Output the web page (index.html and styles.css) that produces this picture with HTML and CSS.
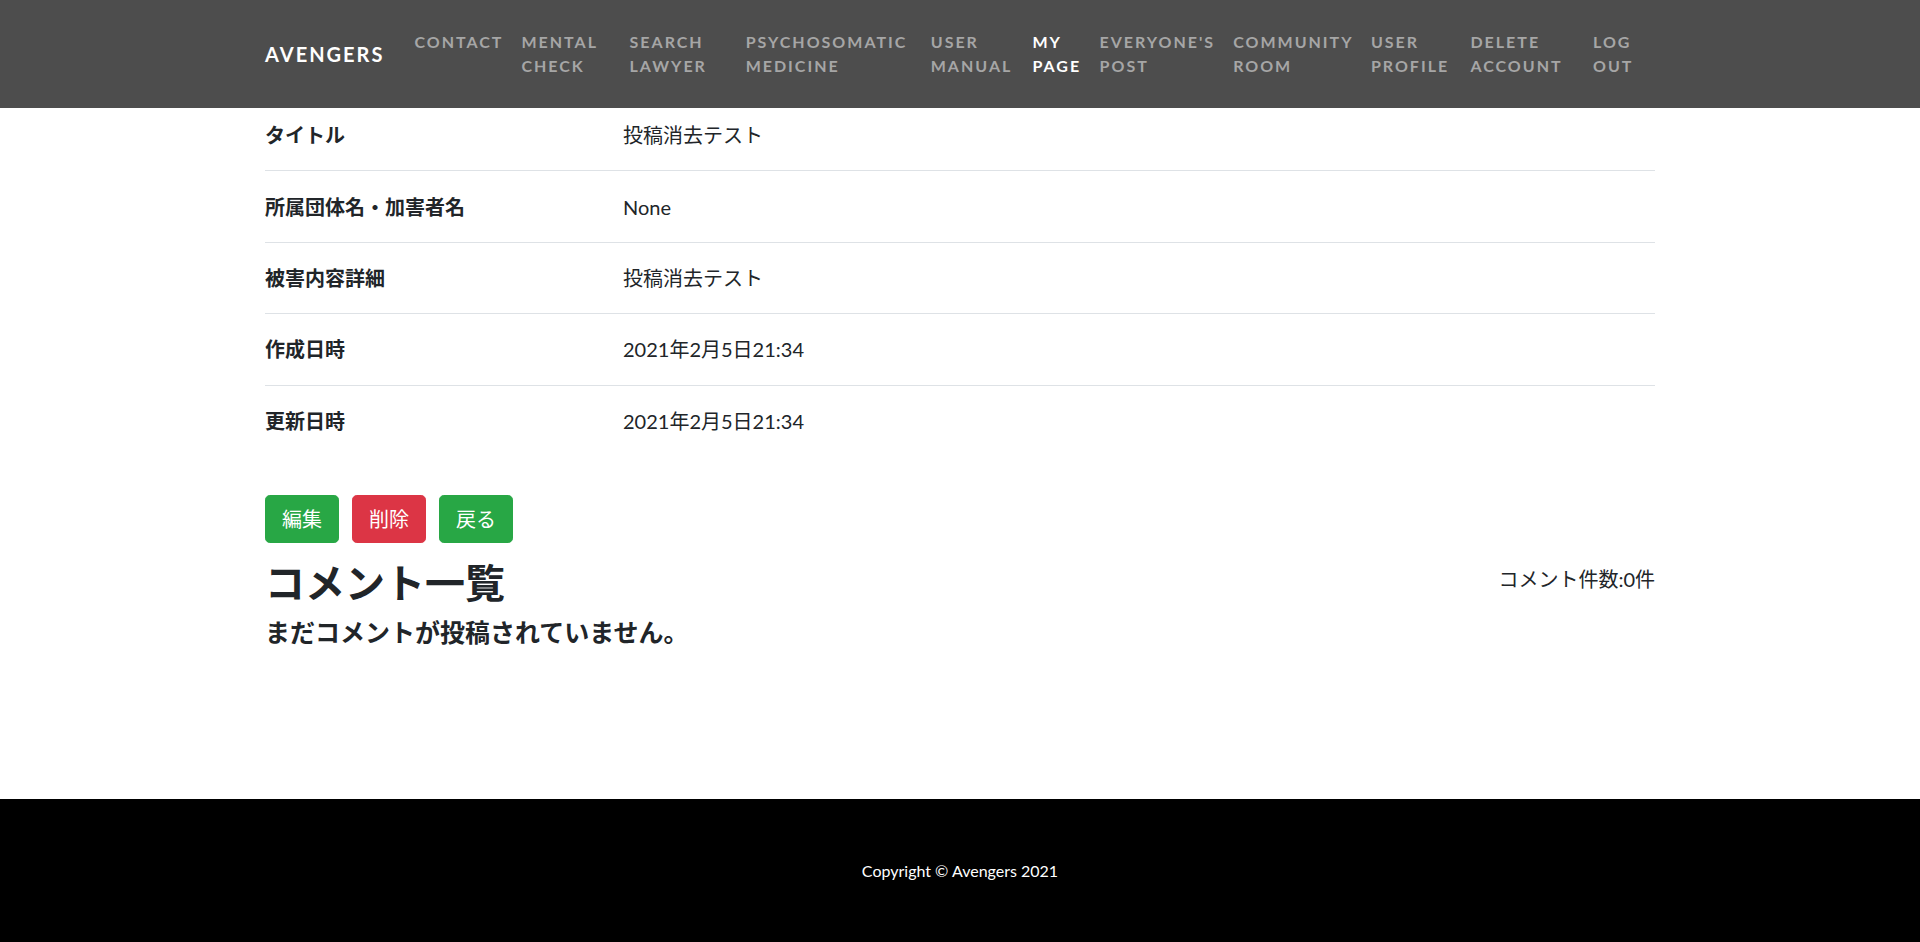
FILE: index.html
```html
<!DOCTYPE html>
<html lang="ja">
<head>
<meta charset="utf-8">
<title>Avengers</title>
<link rel="stylesheet" href="styles.css">
</head>
<body>
<nav class="navbar">
  <div class="nav-inner">
    <a class="brand" href="#">AVENGERS</a>
    <ul class="nav-list">
      <li><a href="#">CONTACT</a></li>
      <li><a href="#">MENTAL CHECK</a></li>
      <li><a href="#">SEARCH LAWYER</a></li>
      <li><a href="#">PSYCHOSOMATIC MEDICINE</a></li>
      <li><a href="#">USER MANUAL</a></li>
      <li><a href="#" class="active">MY PAGE</a></li>
      <li><a href="#">EVERYONE'S POST</a></li>
      <li><a href="#">COMMUNITY ROOM</a></li>
      <li><a href="#">USER PROFILE</a></li>
      <li><a href="#">DELETE ACCOUNT</a></li>
      <li><a href="#">LOG OUT</a></li>
    </ul>
  </div>
</nav>

<main class="container">
  <table class="detail">
    <tr><th>タイトル</th><td>投稿消去テスト</td></tr>
    <tr><th>所属団体名・加害者名</th><td>None</td></tr>
    <tr><th>被害内容詳細</th><td>投稿消去テスト</td></tr>
    <tr><th>作成日時</th><td>2021年2月5日21:34</td></tr>
    <tr><th>更新日時</th><td>2021年2月5日21:34</td></tr>
  </table>

  <div class="actions">
    <a href="#" class="btn btn-green">編集</a>
    <a href="#" class="btn btn-red">削除</a>
    <a href="#" class="btn btn-green">戻る</a>
  </div>

  <div class="comments-head">
    <h1>コメント一覧</h1>
    <p class="count">コメント件数:0件</p>
  </div>
  <h4 class="empty">まだコメントが投稿されていません。</h4>
</main>

<footer class="footer">
  <p>Copyright © Avengers 2021</p>
</footer>
</body>
</html>
```

FILE: styles.css
```css
* { box-sizing: border-box; }

html, body {
  margin: 0;
  padding: 0;
}

body {
  font-family: Lato, "Noto Sans CJK JP", sans-serif;
  font-size: 16px;
  line-height: 1.5;
  color: #212529;
  background: #fff;
}

a { text-decoration: none; }

/* ---------- navbar (fixed, overlays page top) ---------- */
.navbar {
  position: fixed;
  top: 0;
  left: 0;
  right: 0;
  height: 108px;
  background: #4d4d4d;
  z-index: 10;
}

.nav-inner {
  width: 1390px;
  height: 100%;
  margin: 0 auto;
  display: flex;
  align-items: center;
}

.brand {
  font-size: 20px;
  line-height: 30px;
  font-weight: 700;
  letter-spacing: 2px;
  color: #fff;
  margin-right: 20px;
  white-space: nowrap;
  flex: none;
}

.nav-list {
  list-style: none;
  margin: 0 4px 0 0;
  padding: 0;
  display: flex;
  align-items: flex-start;
  flex: 1 1 auto;
  min-width: 0;
}

.nav-list li {
  flex: 0 1 auto;
}

.nav-list a {
  display: block;
  padding: 0 8px 0 10px;
  font-size: 16px;
  line-height: 24px;
  font-weight: 700;
  letter-spacing: 2px;
  color: #a6a6a6;
}

.nav-list a.active { color: #fff; }

/* ---------- main ---------- */
.container {
  width: 1390px;
  margin: 0 auto;
  padding-top: 99px;
  padding-bottom: 144px;
}

.detail {
  width: 100%;
  border-collapse: collapse;
  margin-bottom: 39px;
  font-size: 20px;
  line-height: 30px;
}

.detail th,
.detail td {
  text-align: left;
  padding: 20.2px 0;
  border-top: 1px solid #dee2e6;
  vertical-align: top;
}

.detail th {
  width: 358px;
  font-weight: 700;
}

.detail td { font-weight: 400; }

.actions {
  display: flex;
  gap: 13px;
}

.btn {
  display: inline-block;
  padding: 8px 16px;
  font-size: 20px;
  line-height: 30px;
  color: #fff;
  border: 1px solid transparent;
  border-radius: 4.8px;
}

.btn-green { background: #28a745; border-color: #28a745; }
.btn-red { background: #dc3545; border-color: #dc3545; }

.comments-head {
  display: flex;
  justify-content: space-between;
  align-items: flex-start;
  margin-top: 16px;
}

.comments-head h1 {
  margin: 0 0 8px;
  font-size: 40px;
  line-height: 1.2;
  font-weight: 700;
}

.count {
  margin: 5px 0 0;
  font-size: 20px;
  line-height: 30px;
}

.empty {
  margin: 2px 0 8px;
  font-size: 25px;
  line-height: 1.2;
  font-weight: 700;
}

/* ---------- footer ---------- */
.footer {
  background: #000;
  color: #fff;
  text-align: center;
  padding: 60px 0 59px;
}

.footer p {
  margin: 0;
  font-size: 16px;
  line-height: 24px;
}
```
